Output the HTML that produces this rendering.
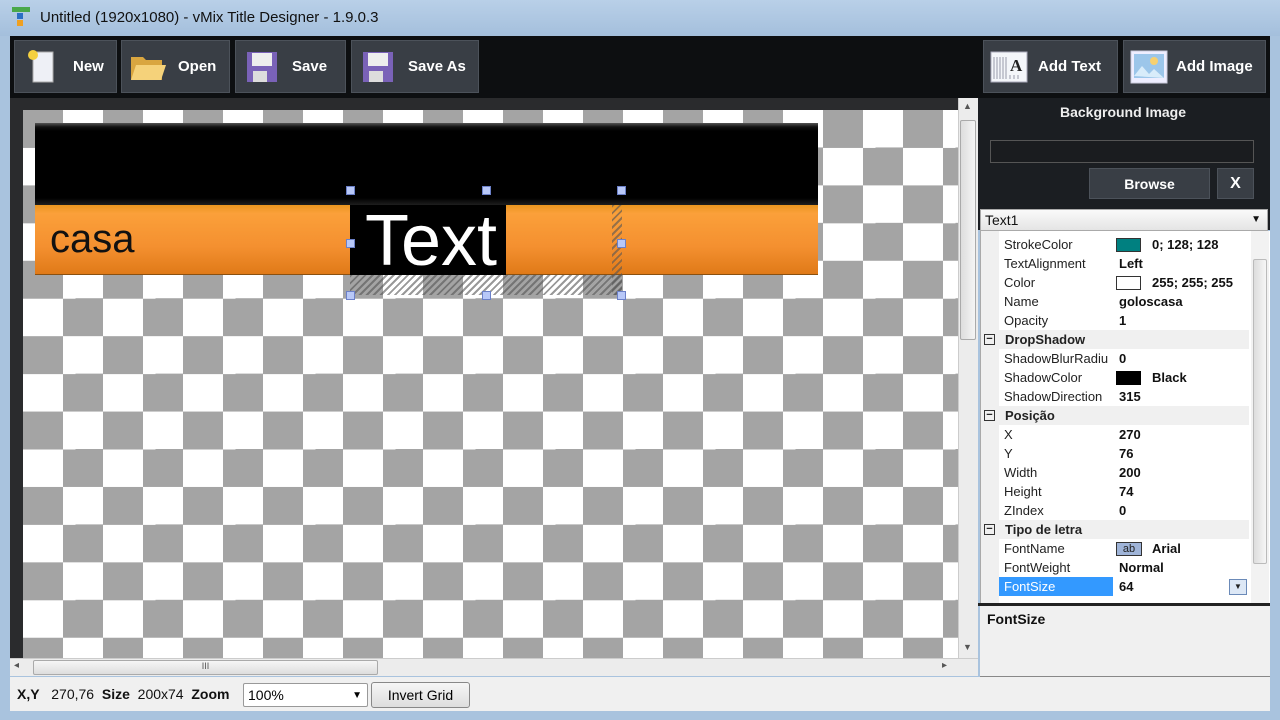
<!DOCTYPE html>
<html><head><style>
*{margin:0;padding:0;box-sizing:border-box}
body{width:1280px;height:720px;overflow:hidden;background:#a9c3de;font-family:"Liberation Sans",sans-serif;position:relative}
.a{position:absolute}
.btn{position:absolute;background:#393e45;border:1px solid #4c525a;color:#fff;font-weight:bold;font-size:15px;display:flex;align-items:center}
.pg{font-size:13px;color:#222}
.row{position:absolute;left:0;width:268px;height:19px;line-height:19px}
.row .k{position:absolute;left:23px}
.row .v{position:absolute;left:138px;font-weight:bold;color:#111}
.cat{background:#f0f0f0;font-weight:bold}
.cat .k{left:24px}
.box{position:absolute;left:3px;top:4px;width:11px;height:11px;border:1px solid #333;font-size:11px;line-height:8px;text-align:center}
.h{position:absolute;width:9px;height:9px;background:#b8c8f8;border:1px solid #6b80c8}
</style></head><body>
<div class="a" style="left:0;top:0;width:1280px;height:36px;background:linear-gradient(#b9d0e8,#a4bfdc)"></div>
<div class="a" style="left:12px;top:7px;width:18px;height:5px;background:#4aa84a"></div>
<div class="a" style="left:17px;top:13px;width:6px;height:6px;background:#2a6fc4"></div>
<div class="a" style="left:17px;top:20px;width:6px;height:6px;background:#f0a020"></div>
<div class="a" style="left:40px;top:9px;font-size:15px;color:#111">Untitled (1920x1080) - vMix Title Designer - 1.9.0.3</div>
<div class="a" style="left:10px;top:36px;width:1260px;height:62px;background:#0d0f11"></div>
<div class="btn" style="left:14px;top:40px;width:103px;height:53px"><svg width="36" height="36" style="margin:0 14px 0 8px"><rect x="10" y="3" width="20" height="30" fill="#eef0f6" stroke="#aaa"/><circle cx="10" cy="6" r="5" fill="#f4d040"/></svg>New</div>
<div class="btn" style="left:121px;top:40px;width:109px;height:53px"><svg width="40" height="36" style="margin:0 10px 0 6px"><path d="M3 8h12l3 3h16v20H3z" fill="#d9a640"/><path d="M8 16h30l-5 15H3z" fill="#f5d27a"/></svg>Open</div>
<div class="btn" style="left:235px;top:40px;width:111px;height:53px"><svg width="36" height="36" style="margin:0 12px 0 8px"><rect x="3" y="3" width="30" height="30" fill="#7a62b8"/><rect x="8" y="4" width="20" height="13" fill="#eee"/><rect x="9" y="22" width="14" height="11" fill="#ddd"/></svg>Save</div>
<div class="btn" style="left:351px;top:40px;width:128px;height:53px"><svg width="36" height="36" style="margin:0 12px 0 8px"><rect x="3" y="3" width="30" height="30" fill="#7a62b8"/><rect x="8" y="4" width="20" height="13" fill="#eee"/><rect x="9" y="22" width="14" height="11" fill="#ddd"/></svg>Save As</div>
<div class="btn" style="left:983px;top:40px;width:135px;height:53px"><svg width="38" height="32" style="margin:0 10px 0 6px"><rect x="1" y="1" width="36" height="30" fill="#f4f6fa" stroke="#aab"/><path d="M4 6v22M7 6v22M10 6v22M13 6v22M16 6v22M20 24v4M24 24v4M28 24v4" stroke="#99a" /><text x="20" y="20" font-size="17" font-family="Liberation Serif" fill="#222">A</text></svg>Add Text</div>
<div class="btn" style="left:1123px;top:40px;width:143px;height:53px"><svg width="38" height="34" style="margin:0 8px 0 6px"><rect x="1" y="1" width="36" height="32" fill="#eef" stroke="#ccd"/><rect x="4" y="4" width="30" height="24" fill="#9cc6ea"/><circle cx="24" cy="11" r="4" fill="#f6d070"/><path d="M4 26l8-10 7 8 5-5 10 9z" fill="#d8ecfa"/></svg>Add Image</div>
<div class="a" style="left:10px;top:98px;width:948px;height:560px;background:#2a2b2d"></div>
<div class="a" style="left:23px;top:110px;width:935px;height:548px;background:conic-gradient(#fff 0 25%,#a4a4a4 0 50%,#fff 0 75%,#a4a4a4 0);background-size:80px 75.4px;background-position:0 0"></div>
<div class="a" style="left:35px;top:123px;width:783px;height:83px;background:linear-gradient(#555 0,#111 4px,#000 8px,#000 75px,#222)"></div>
<div class="a" style="left:35px;top:205px;width:783px;height:70px;background:linear-gradient(#e9951f,#fba03a 12%,#f49030 60%,#e07a18);border-bottom:1px solid #8a5010"></div>
<div class="a" style="left:50px;top:217px;font-size:40px;color:#111">casa</div>
<div class="a" style="left:350px;top:205px;width:156px;height:70px;background:#000"></div>
<div class="a" style="left:365px;top:198px;font-size:72px;color:#fff;line-height:86px">Text</div>
<div class="a" style="left:350px;top:275px;width:272px;height:20px;background:repeating-linear-gradient(135deg,#555 0 2px,transparent 2px 5px);opacity:.6"></div>
<div class="a" style="left:612px;top:205px;width:10px;height:90px;background:repeating-linear-gradient(135deg,#555 0 2px,transparent 2px 5px);opacity:.6"></div>
<div class="h" style="left:346px;top:186px"></div><div class="h" style="left:482px;top:186px"></div><div class="h" style="left:617px;top:186px"></div>
<div class="h" style="left:346px;top:239px"></div><div class="h" style="left:617px;top:239px"></div>
<div class="h" style="left:346px;top:291px"></div><div class="h" style="left:482px;top:291px"></div><div class="h" style="left:617px;top:291px"></div>
<div class="a" style="left:958px;top:98px;width:20px;height:560px;background:#ececec;border-left:1px solid #ccc"></div>
<div class="a" style="left:960px;top:120px;width:16px;height:220px;background:linear-gradient(90deg,#ddd,#f5f5f5);border:1px solid #aaa;border-radius:2px"></div>
<div class="a" style="left:963px;top:101px;font-size:9px;color:#555">▲</div>
<div class="a" style="left:963px;top:642px;font-size:9px;color:#555">▼</div>
<div class="a" style="left:10px;top:658px;width:968px;height:18px;background:#ececec;border-top:1px solid #ccc"></div>
<div class="a" style="left:33px;top:660px;width:345px;height:15px;background:linear-gradient(#f6f6f6,#ddd);border:1px solid #aaa;border-radius:2px;font-size:9px;text-align:center;color:#555">III</div>
<div class="a" style="left:14px;top:660px;font-size:10px;color:#555">◂</div>
<div class="a" style="left:942px;top:660px;font-size:10px;color:#555">▸</div>
<div class="a" style="left:978px;top:98px;width:292px;height:132px;background:#1b1e22"></div>
<div class="a" style="left:978px;top:104px;width:290px;text-align:center;color:#eee;font-weight:bold;font-size:14px">Background Image</div>
<div class="a" style="left:990px;top:140px;width:264px;height:23px;border:1px solid #555;background:#1a1c1f"></div>
<div class="btn" style="left:1089px;top:168px;width:121px;height:31px;justify-content:center;font-size:14px">Browse</div>
<div class="btn" style="left:1217px;top:168px;width:37px;height:31px;justify-content:center;font-size:16px">X</div>
<div class="a" style="left:980px;top:209px;width:288px;height:22px;background:linear-gradient(#fafafa,#e4e4e4);border:1px solid #aaa;font-size:14px;line-height:20px;padding-left:4px;color:#111">Text1<span style="position:absolute;right:6px;font-size:10px">▼</span></div>
<div class="a pg" style="left:980px;top:231px;width:290px;height:372px;background:#fff;border-left:1px solid #aaa">
<div class="a" style="left:0;top:0;width:18px;height:372px;background:#f0f0f0"></div>
<div class="row" style="top:4px"><span class="k">StrokeColor</span><span class="a" style="left:135px;top:3px;width:25px;height:14px;background:#008080;border:1px solid #333"></span><span class="v" style="left:171px">0; 128; 128</span></div>
<div class="row" style="top:23px"><span class="k">TextAlignment</span><span class="v">Left</span></div>
<div class="row" style="top:42px"><span class="k">Color</span><span class="a" style="left:135px;top:3px;width:25px;height:14px;background:#fff;border:1px solid #333"></span><span class="v" style="left:171px;white-space:nowrap;width:96px;overflow:hidden">255; 255; 255</span></div>
<div class="row" style="top:61px"><span class="k">Name</span><span class="v">goloscasa</span></div>
<div class="row" style="top:80px"><span class="k">Opacity</span><span class="v">1</span></div>
<div class="row cat" style="top:99px"><span class="box">−</span><span class="k">DropShadow</span></div>
<div class="row" style="top:118px"><span class="k">ShadowBlurRadiu</span><span class="v">0</span></div>
<div class="row" style="top:137px"><span class="k">ShadowColor</span><span class="a" style="left:135px;top:3px;width:25px;height:14px;background:#000"></span><span class="v" style="left:171px">Black</span></div>
<div class="row" style="top:156px"><span class="k">ShadowDirection</span><span class="v">315</span></div>
<div class="row cat" style="top:175px"><span class="box">−</span><span class="k">Posição</span></div>
<div class="row" style="top:194px"><span class="k">X</span><span class="v">270</span></div>
<div class="row" style="top:213px"><span class="k">Y</span><span class="v">76</span></div>
<div class="row" style="top:232px"><span class="k">Width</span><span class="v">200</span></div>
<div class="row" style="top:251px"><span class="k">Height</span><span class="v">74</span></div>
<div class="row" style="top:270px"><span class="k">ZIndex</span><span class="v">0</span></div>
<div class="row cat" style="top:289px"><span class="box">−</span><span class="k">Tipo de letra</span></div>
<div class="row" style="top:308px"><span class="k">FontName</span><span class="a" style="left:135px;top:3px;width:26px;height:14px;background:#9fb4d8;border:1px solid #333;font-size:11px;line-height:12px;text-align:center">ab</span><span class="v" style="left:171px">Arial</span></div>
<div class="row" style="top:327px"><span class="k">FontWeight</span><span class="v">Normal</span></div>
<div class="row" style="top:346px"><span class="a" style="left:18px;top:0;width:114px;height:19px;background:#3399ff"></span><span class="k" style="color:#fff">FontSize</span><span class="v">64</span><span class="a" style="left:248px;top:2px;width:18px;height:16px;border:1px solid #6b8ab8;background:#dde8f6;font-size:8px;text-align:center;line-height:14px">▼</span></div>
<div class="a" style="left:270px;top:0;width:18px;height:372px;background:#f2f2f2"></div>
<div class="a" style="left:272px;top:28px;width:14px;height:305px;background:linear-gradient(90deg,#ddd,#f6f6f6);border:1px solid #bbb;border-radius:2px"></div>
</div>
<div class="a" style="left:978px;top:603px;width:292px;height:3px;background:#222"></div>
<div class="a" style="left:980px;top:606px;width:290px;height:71px;background:#f0f0f0;border-bottom:1px solid #888;font-size:14px;font-weight:bold;padding:5px 7px;color:#111">FontSize</div>
<div class="a" style="left:10px;top:677px;width:1260px;height:34px;background:#f0f0f0;font-size:14px;color:#111"></div>
<div class="a" style="left:17px;top:686px;font-size:14px;color:#111"><b>X,Y</b>&nbsp;&nbsp; 270,76 &nbsp;<b>Size</b>&nbsp; 200x74 &nbsp;<b>Zoom</b></div>
<div class="a" style="left:243px;top:683px;width:125px;height:24px;background:#fff;border:1px solid #999;border-radius:2px;font-size:14px;padding:3px 4px">100%<span style="position:absolute;right:5px;font-size:10px;top:6px">▼</span></div>
<div class="a" style="left:371px;top:682px;width:99px;height:26px;background:linear-gradient(#f6f6f6,#dedede);border:1px solid #888;border-radius:3px;font-size:14px;text-align:center;line-height:24px">Invert Grid</div>
</body></html>
